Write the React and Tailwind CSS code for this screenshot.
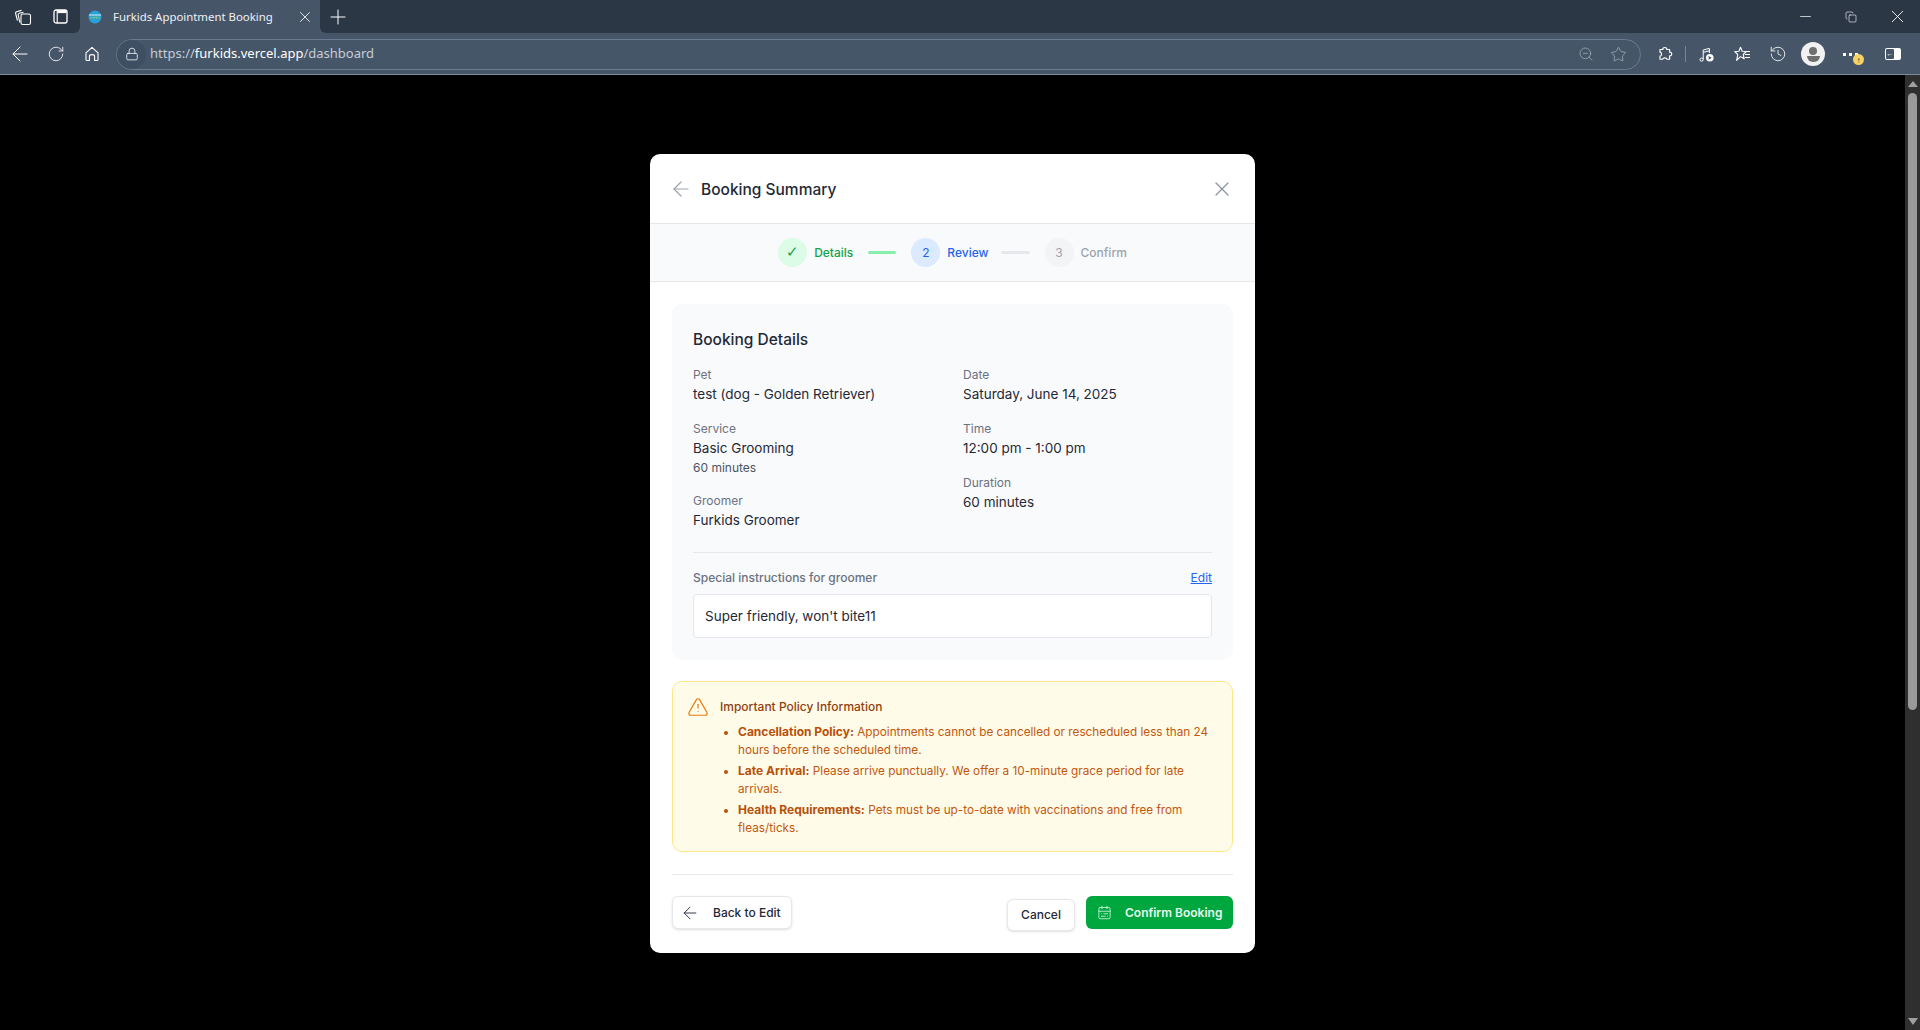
import React from "react";
import { ArrowLeft, X, CalendarRange, TriangleAlert, RotateCw, Lock, ZoomOut, Star, History, Plus, Minus, Copy } from "lucide-react";

const font = { fontFamily: "Inter, sans-serif" };

function Field({ label, value, sub, cls }) {
  return (
    <div className={cls}>
      <div className="h-[20px] text-[12px] leading-[22px] text-[#6b7280]">{label}</div>
      <div className="text-[13.5px] leading-[20px] text-[#1f2937]">{value}</div>
      {sub && <div className="text-[12px] leading-[20px] text-[#4b5563]">{sub}</div>}
    </div>
  );
}

function Step({ n, label, circle, text, numCls = "" }) {
  return (
    <div className="flex items-center gap-[7px]">
      <div className={`w-[29px] h-[29px] rounded-full flex items-center justify-center text-[12px] ${circle}`}><span className={numCls}>{n}</span></div>
      <span className={`mt-[1px] text-[12px] font-medium ${text}`}>{label}</span>
    </div>
  );
}

function Li({ head, children }) {
  return (
    <li className="text-[11.75px] leading-[17.6px]">
      <strong className="text-[12px] font-bold text-[#b8500a]">{head}</strong> {children}
    </li>
  );
}

function WorkspacesIcon() {
  return (
    <svg width="18" height="18" viewBox="0 0 18 18" fill="none" stroke="currentColor" strokeWidth="1.1">
      <path d="M3.5 12.5 L1.6 5.5 Q1.3 4.2 2.6 3.8 L7.5 2.4" />
      <path d="M5.8 14.5 L4.2 7 Q3.9 5.6 5.3 5.2 L9.5 4.2" />
      <rect x="7" y="6" width="9.5" height="10.5" rx="1.8" />
    </svg>
  );
}

function TabsIcon() {
  return (
    <svg width="15" height="15" viewBox="0 0 15 15" fill="none" stroke="currentColor">
      <rect x="1" y="1" width="13" height="13" rx="2" strokeWidth="1.3" />
      <path d="M4.5 2.6 H13.5" strokeWidth="3" />
      <path d="M4.2 1 V14" strokeWidth="1.1" />
    </svg>
  );
}

function Favicon() {
  return (
    <svg width="14" height="14" viewBox="0 0 14 14">
      <circle cx="7" cy="7" r="6.5" fill="#2a9fd8" />
      <path d="M1 5 H13" stroke="#d9eef8" strokeWidth="1" />
      <path d="M2.5 8.5 V7.5 M4 8.5 V6.5 M5.5 8.5 V7 M7 8.5 V6.5 M8.5 8.5 V7 M10 8.5 V6.5 M11.5 8.5 V7.5" stroke="#7fc96a" strokeWidth="1" />
    </svg>
  );
}

function HomeIcon() {
  return (
    <svg width="16" height="16" viewBox="0 0 16 16" fill="none" stroke="currentColor" strokeWidth="1.1" strokeLinejoin="round">
      <path d="M2 6.8 L8 1.4 L14 6.8 V13.4 Q14 14.5 13 14.5 H10.6 V10.4 Q10.6 8.6 8 8.6 Q5.4 8.6 5.4 10.4 V14.5 H3 Q2 14.5 2 13.4 Z" />
    </svg>
  );
}

function ExtensionIcon() {
  return (
    <svg width="16" height="16" viewBox="0 0 16 16" fill="none" stroke="currentColor" strokeWidth="1.15" strokeLinejoin="round">
      <path d="M3 3.5 H5.8 C5.4 0.8 10.2 0.8 9.8 3.5 H12.6 V6.2 C15.4 5.8 15.4 10.2 12.6 9.8 V13.2 H9.8 C10.2 11.4 5.4 11.4 5.8 13.2 H3 V10 C5 10.2 5 6 3 6.2 Z" />
    </svg>
  );
}

function MediaIcon() {
  return (
    <svg width="15" height="15" viewBox="0 0 15 15" fill="none" stroke="currentColor" strokeWidth="1">
      <circle cx="2.6" cy="12.6" r="1.6" />
      <path d="M4.2 12.4 V3 L10.4 1.4 V6" />
      <path d="M4.2 5.4 L10.4 3.8" />
      <circle cx="10.8" cy="10.8" r="3.8" fill="currentColor" stroke="none" />
      <path d="M9.6 8.9 L12.6 10.8 L9.6 12.7 Z" fill="#475569" stroke="none" />
    </svg>
  );
}

function FavoritesIcon() {
  return (
    <svg width="17" height="16" viewBox="0 0 17 16" fill="none" stroke="currentColor" strokeWidth="1.1" strokeLinejoin="round">
      <path d="M6.5 1.2 L8.2 5.2 L12.4 5.5 L9.2 8.4 L10.2 12.8 L6.5 10.6 L2.6 14.4 L3.8 8.6 L0.8 5.5 L4.9 5.2 Z" />
      <path d="M11.5 5.5 H16 M10.8 8.5 H16 M11 11.5 H16" />
    </svg>
  );
}

function ProfileIcon() {
  return (
    <div className="w-[24px] h-[24px] rounded-full bg-[#f1f1f1] flex flex-col items-center justify-center shrink-0">
      <div className="w-[8px] h-[8px] rounded-full bg-[#6f6f6f]" />
      <div className="w-[13px] h-[6px] mt-[1px] rounded-b-full rounded-t-[3px] bg-[#6f6f6f]" />
    </div>
  );
}

function Browser() {
  return (
    <div className="shrink-0 text-white" style={{ fontFamily: "'Noto Sans', sans-serif" }}>
      <div className="h-[33px] bg-[#475569] flex items-stretch">
        <div className="w-[80px] bg-[#2c3746] rounded-br-[6px] flex items-center pl-[14px]">
          <WorkspacesIcon />
          <div className="ml-[21px]"><TabsIcon /></div>
        </div>
        <div className="w-[240px] bg-[#475569] rounded-t-[8px] flex items-center pl-[8px] pr-[6px]">
          <Favicon />
          <span className="ml-[11px] text-[11.4px] flex-1 whitespace-nowrap text-[#eef1f5]">Furkids Appointment Booking</span>
          <X size={18} strokeWidth={1.1} />
        </div>
        <div className="flex-1 bg-[#2c3746] rounded-bl-[6px] flex items-center">
          <div className="ml-[6px]"><Plus size={24} strokeWidth={1} /></div>
          <div className="flex-1" />
          <div className="w-[46px] flex justify-center"><Minus size={17} strokeWidth={1} /></div>
          <div className="w-[46px] flex justify-center"><Copy size={12} strokeWidth={1.2} /></div>
          <div className="w-[46px] flex justify-center"><X size={21} strokeWidth={1} /></div>
        </div>
      </div>
      <div className="h-[42px] bg-[#475569] border-b border-[#7a8a9e] flex items-center pt-[1px]">
        <div className="w-[38px] flex justify-center pl-[1px]"><ArrowLeft size={24} strokeWidth={1} /></div>
        <div className="w-[36px] flex justify-center"><RotateCw size={18} strokeWidth={1.1} /></div>
        <div className="w-[36px] flex justify-center"><HomeIcon /></div>
        <div className="ml-[6px] w-[1525px] h-[31px] rounded-full border border-[#6b7b8f] bg-[#465669] flex items-center pr-[12px]">
          <div className="w-[29px] h-[29px] rounded-full bg-[#3f4f63] flex items-center justify-center"><Lock size={14} strokeWidth={1.3} /></div>
          <span className="ml-[4px] text-[13px] flex-1 text-[#c5ccd6]">https://<span className="text-white">furkids.vercel.app</span>/dashboard</span>
          <ZoomOut size={16} strokeWidth={1.1} className="text-[#a5afbc] mr-[16px]" />
          <Star size={17} strokeWidth={1.1} className="text-[#a5afbc] mr-[1px]" />
        </div>
        <div className="ml-[16px]"><ExtensionIcon /></div>
        <div className="ml-[12px] w-px h-[16px] bg-[#76859a]" />
        <div className="ml-[13px]"><MediaIcon /></div>
        <div className="ml-[20px]"><FavoritesIcon /></div>
        <div className="ml-[18px] flex"><History size={18} strokeWidth={1.1} /></div>
        <div className="ml-[14px]"><ProfileIcon /></div>
        <div className="ml-[16px] w-[24px] h-[24px] relative flex items-center gap-[3px] pl-[2px]">
          <div className="w-[3px] h-[3px] bg-white" /><div className="w-[3px] h-[3px] bg-white" /><div className="w-[3px] h-[3px] bg-white" />
          <div className="absolute left-[12px] top-[12px] w-[11px] h-[11px] rounded-full bg-[#f6d365] text-[#2c3746] flex items-center justify-center text-[8px] leading-none font-bold">↑</div>
        </div>
        <div className="ml-[20px] w-[16px] h-[12px] rounded-[2px] bg-white flex items-center justify-start pl-[1px]">
          <div className="w-[8px] h-[10px] bg-[#475569] rounded-[1px] text-white text-[7px] leading-[10px] text-center">←</div>
        </div>
      </div>
    </div>
  );
}

export default function App() {
  return (
    <div className="h-[1030px] w-full overflow-hidden bg-black flex flex-col">
      <Browser />
      <div className="flex-1 flex min-h-0">
        <div className="flex-1 flex justify-center pt-[79px]" style={font}>
          <div className="w-[605px] h-[799px] bg-white rounded-[10px] flex flex-col overflow-hidden">
            <div className="h-[70px] border-b border-[#e5e7eb] flex items-center pl-[19px] pr-[21px] shrink-0">
              <ArrowLeft size={24} strokeWidth={1.2} className="text-[#9ca3af]" />
              <h2 className="ml-[8px] mt-[3px] text-[15.5px] font-medium text-[#1f2937] flex-1">Booking Summary</h2>
              <X size={24} strokeWidth={1.2} className="text-[#8b93a1]" />
            </div>
            <div className="h-[58px] bg-[#f9fafb] border-b border-[#e5e7eb] flex items-center justify-center shrink-0">
              <Step n="✓" label="Details" circle="bg-[#dcfce7] text-[#16a34a]" text="text-[#16a34a]" numCls="text-[15px] leading-none font-light [font-family:'DejaVu_Sans',sans-serif]" />
              <div className="mx-[15px] w-[28px] h-[3px] rounded bg-[#86efac]" />
              <Step n="2" label="Review" circle="bg-[#dbeafe] text-[#2563eb]" text="text-[#2563eb]" />
              <div className="ml-[12px] mr-[15px] w-[29px] h-[3px] rounded bg-[#e5e7eb]" />
              <Step n="3" label="Confirm" circle="bg-[#f3f4f6] text-[#9ca3af]" text="text-[#9ca3af]" />
            </div>
            <div className="px-[22px] pt-[22px] flex flex-col flex-1">
              <div className="h-[356px] bg-[#f9fafb] rounded-[10px] px-[21px] pt-[24px]">
                <h3 className="text-[15.5px] leading-[24px] font-medium text-[#1f2937]">Booking Details</h3>
                <div className="mt-[12px] h-[189px] border-b border-[#e5e7eb] flex">
                  <div className="w-[270px]">
                    <Field label="Pet" value="test (dog - Golden Retriever)" />
                    <Field cls="mt-[14px]" label="Service" value="Basic Grooming" sub="60 minutes" />
                    <Field cls="mt-[12px]" label="Groomer" value="Furkids Groomer" />
                  </div>
                  <div>
                    <Field label="Date" value="Saturday, June 14, 2025" />
                    <Field cls="mt-[14px]" label="Time" value="12:00 pm - 1:00 pm" />
                    <Field cls="mt-[14px]" label="Duration" value="60 minutes" />
                  </div>
                </div>
                <div className="mt-[15px] flex justify-between items-center h-[20px]">
                  <span className="text-[12px] font-medium text-[#6b7280]">Special instructions for groomer</span>
                  <a className="text-[12px] text-[#2563eb] underline">Edit</a>
                </div>
                <div className="mt-[6px] h-[44px] bg-white border border-[#e5e7eb] rounded-[4px] flex items-center pl-[11px] text-[13.5px] text-[#1f2937]">Super friendly, won't bite11</div>
              </div>
              <div className="mt-[21px] h-[171px] bg-[#fefce8] border border-[#fde68a] rounded-[10px] px-[16px] pt-[14px] text-[#c4560e]">
                <div className="flex items-center">
                  <TriangleAlert size={22} strokeWidth={1.3} className="text-[#ea7a10] -ml-[2px]" />
                  <span className="ml-[11px] text-[12px] font-medium text-[#92400e]">Important Policy Information</span>
                </div>
                <ul className="mt-[5px] ml-[32px] list-disc pl-[17px] flex flex-col gap-[3px] marker:text-[#b8500a]">
                  <Li head="Cancellation Policy:">Appointments cannot be cancelled or rescheduled less than 24 hours before the scheduled time.</Li>
                  <Li head="Late Arrival:">Please arrive punctually. We offer a 10-minute grace period for late arrivals.</Li>
                  <Li head="Health Requirements:">Pets must be up-to-date with vaccinations and free from fleas/ticks.</Li>
                </ul>
              </div>
              <div className="mt-[22px] border-t border-[#e5e7eb] pt-[21px] flex items-start justify-between">
                <button className="w-[120px] h-[33px] border border-[#e5e7eb] rounded-[6px] bg-white flex items-center pl-[7px] text-[12px] font-medium text-[#1f2937] shadow-sm">
                  <ArrowLeft size={20} strokeWidth={1.1} />
                  <span className="ml-[13px]">Back to Edit</span>
                </button>
                <div className="flex items-start gap-[11px]">
                  <button className="mt-[3px] w-[68px] h-[32px] border border-[#e5e7eb] rounded-[6px] bg-white text-[12px] font-medium text-[#1f2937] shadow-sm">Cancel</button>
                  <button className="w-[147px] h-[33px] rounded-[6px] bg-[#00a63e] flex items-center pl-[11px] text-[12px] font-semibold text-white">
                    <CalendarRange size={15} strokeWidth={1.3} className="text-[#d1fae5]" />
                    <span className="ml-[13px] text-[#e6f9ee]">Confirm Booking</span>
                  </button>
                </div>
              </div>
            </div>
          </div>
        </div>
        <div className="w-[15px] bg-[#2f2f2f] flex flex-col items-center shrink-0">
          <div className="h-[17px] flex items-center justify-center"><div className="w-0 h-0 border-x-[5px] border-x-transparent border-b-[6px] border-b-[#a0a0a0]" /></div>
          <div className="w-[9px] h-[617px] rounded-full bg-[#9a9a9a] mt-[1px]" />
          <div className="flex-1" />
          <div className="h-[14px] flex items-start justify-center pt-[2px]"><div className="w-0 h-0 border-x-[5px] border-x-transparent border-t-[7px] border-t-[#a0a0a0]" /></div>
        </div>
      </div>
    </div>
  );
}
